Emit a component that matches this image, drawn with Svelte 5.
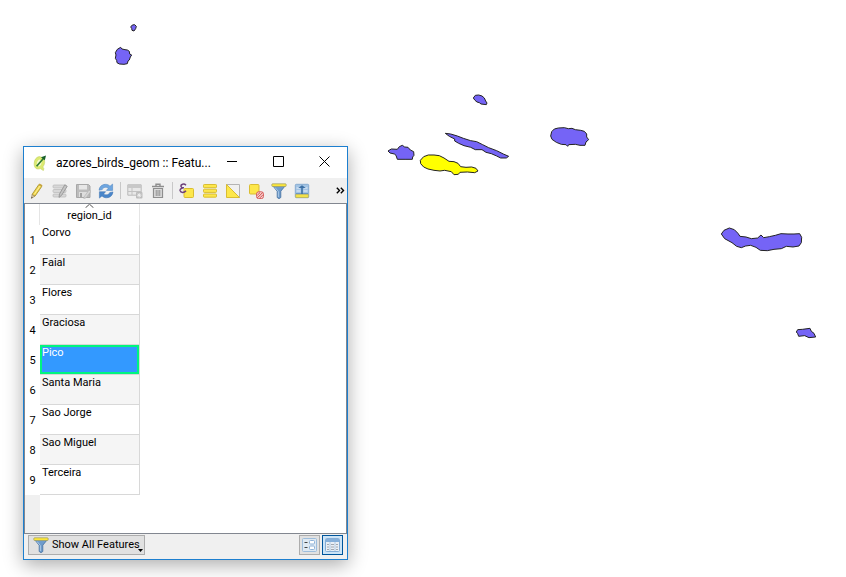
<script>
  const regions = ['Corvo', 'Faial', 'Flores', 'Graciosa', 'Pico', 'Santa Maria', 'Sao Jorge', 'Sao Miguel', 'Terceira'];
  let selected = $state('Pico');

  // Island outlines; each group has its own origin, in thirds of a pixel.
  const islands = [
    { name: 'Corvo', x: 100, y: 10, d: 'M97 45 L104 44 L109 49 L107 56 L102 63 L96 61 L95 55 L92 51Z' },
    { name: 'Flores', x: 100, y: 10, d: 'M62 112 L66 117 L75 119 L82 120 L88 124 L89 132 L95 135 L91 141 L88 150 L84 153 L82 161 L72 163 L58 162 L51 158 L50 151 L46 145 L48 135 L46 128 L52 118Z' },
    { name: 'Graciosa', x: 380, y: 85, d: 'M286 31 L296 30 L306 33 L313 39 L317 48 L321 54 L319 59 L303 57 L298 53 L291 51 L285 46 L280 39Z' },
    { name: 'Sao Jorge', x: 380, y: 85, d: 'M196 145 L212 147 L232 153 L250 160 L272 167 L290 170 L308 179 L326 188 L350 197 L370 207 L386 214 L379 219 L362 219 L350 213 L334 206 L318 202 L306 194 L286 194 L272 187 L252 182 L236 175 L224 168 L224 162 L208 154Z' },
    { name: 'Faial', x: 380, y: 85, d: 'M24 198 L34 192 L52 193 L58 185 L67 181 L74 186 L84 187 L91 195 L101 200 L102 211 L98 216 L97 223 L78 223 L52 223 L48 211 L43 207 L30 204Z' },
    { name: 'Pico', x: 380, y: 85, d: 'M131 215 L145 210 L162 210 L178 212 L192 219 L207 229 L222 230 L234 235 L242 245 L258 247 L275 246 L288 250 L294 258 L284 263 L262 261 L240 262 L235 268 L222 269 L214 260 L194 256 L180 258 L162 256 L144 252 L131 246 L122 236 L121 226Z' },
    { name: 'Terceira', x: 540, y: 115, d: 'M43 42 L55 39 L73 38 L85 41 L96 40 L106 44 L122 46 L133 49 L140 57 L140 66 L146 74 L138 81 L135 91 L120 91 L106 88 L86 89 L83 94 L78 89 L64 88 L49 82 L36 73 L32 63 L35 50Z' },
    { name: 'Sao Miguel', x: 710, y: 220, d: 'M34 42 L42 31 L58 24 L73 29 L84 40 L90 49 L108 51 L124 56 L143 54 L153 45 L161 53 L178 50 L196 46 L213 41 L234 42 L252 42 L269 41 L275 52 L274 68 L267 78 L249 81 L229 79 L214 86 L192 88 L172 92 L151 91 L138 82 L122 76 L107 78 L94 83 L80 79 L66 68 L44 56Z' },
    { name: 'Santa Maria', x: 710, y: 220, d: 'M263 329 L278 328 L300 325 L304 334 L312 340 L317 351 L297 353 L284 347 L266 349 L263 341 L259 336Z' }
  ];
</script>

{#snippet funnel()}
  <svg width="16" height="16" viewBox="0 0 16 16" aria-hidden="true">
    <path d="M1.5 2.5 L6.2 8.2 V14.5 L8 15.7 L9.8 14.5 V8.2 L14.5 2.5Z" fill="#6f9ccb" stroke="#44709f" stroke-width=".8" />
    <path d="M4 4.5 L7.4 8.5 V14" fill="none" stroke="#a9c8e6" />
    <rect x=".8" y=".8" width="14.4" height="2.7" rx=".8" fill="#fbe63a" stroke="#9a9a6a" stroke-width=".7" />
  </svg>
{/snippet}

<main>
  <svg class="map" viewBox="0 0 846 577" role="img" aria-label="Map of the Azores">
    {#each islands as island}
      <path
        d={island.d}
        transform="translate({island.x} {island.y}) scale(.3333)"
        class:picked={island.name === selected}
      />
    {/each}
  </svg>

  <section class="window" aria-label="Attribute table">
    <header class="titlebar">
      <svg width="16" height="16" viewBox="0 0 16 16" aria-hidden="true">
        <path d="M7.4 1.6 C4 2 2.4 5 2.2 8.2 C2 12 3.6 14.2 6.6 14 L8.4 13.6 L11.4 15.6 L11.8 13.6 L10.8 12 C13 9.4 13.2 5.6 11.8 3Z" fill="#dcea72" stroke="#c3d163" stroke-width=".6" />
        <path d="M7.8 4.6 C5.8 5 4.8 7 4.8 9.2 C5 11.8 8 11.8 9.2 9.2 L9.8 6Z" fill="#f7fbd0" />
        <path d="M4.6 11.2 L11.6 3.2" stroke="#2f7a2f" stroke-width="1.7" />
        <path d="M9 2.2 L14 .4 L12.8 5.2Z" fill="#175f2b" />
      </svg>
      <h1>azores_birds_geom :: Featu...</h1>
      <div class="controls">
        <button aria-label="Minimize"><svg width="11" height="11" viewBox="0 0 11 11"><path d="M0 5.5H10" /></svg></button>
        <button aria-label="Maximize"><svg width="11" height="11" viewBox="0 0 11 11"><path d="M.5 .5H10.5V10.5H.5Z" /></svg></button>
        <button aria-label="Close"><svg width="11" height="11" viewBox="0 0 11 11"><path d="M.5 .5L10.5 10.5M10.5 .5L.5 10.5" /></svg></button>
      </div>
    </header>

    <div class="toolbar" role="toolbar" aria-label="Table tools">
      <button aria-label="Toggle editing">
        <svg width="16" height="16" viewBox="0 0 16 16">
          <path d="M3 11.5 L9.8 1.6 L12.8 3.4 L6 13.2Z" fill="#f0d64a" stroke="#a08a2c" stroke-width=".8" />
          <path d="M5.3 11.4 L11.2 2.8" stroke="#fff2a0" />
          <path d="M3 11.5 L6 13.2 L2.4 15.4Z" fill="#ddc9a0" stroke="#8b7a50" stroke-width=".5" />
          <path d="M9.8 1.6 L10.6 .5 L13.5 2.2 L12.8 3.4Z" fill="#c7a23b" />
          <path d="M2.3 15.6 L2.5 13.8 L3.8 14.6Z" fill="#444" />
        </svg>
      </button>
      <button aria-label="Multi edit">
        <svg width="16" height="16" viewBox="0 0 16 16">
          <g fill="#d8d8d8" stroke="#bcbcbc" stroke-width=".8"><rect x="1" y="2" width="13" height="3" rx="1" /><rect x="1" y="6.5" width="13" height="3" rx="1" /><rect x="1" y="11" width="13" height="3" rx="1" /></g>
          <path d="M7.5 11 L12.8 1.8 L15.2 3.3 L9.6 12.3 L7 14.4Z" fill="#c4c4c4" stroke="#959595" stroke-width=".9" />
        </svg>
      </button>
      <button aria-label="Save edits">
        <svg width="16" height="16" viewBox="0 0 16 16">
          <path d="M1.5 1.5H13.5L15 3V14.5H1.5Z" fill="#bcbcbc" stroke="#a8a8a8" />
          <rect x="4" y="2" width="8" height="4.5" fill="#e7e7e7" />
          <rect x="4" y="9" width="8" height="5" fill="#dedede" />
          <rect x="5" y="10" width="2" height="4" fill="#a2a2a2" />
          <path d="M9 14 L14 7 L16 8.3 L11 14.8 L8.8 15.6Z" fill="#d6d6d6" stroke="#b0b0b0" stroke-width=".6" />
        </svg>
      </button>
      <button aria-label="Reload">
        <svg width="16" height="16" viewBox="0 0 16 16">
          <path d="M1 7.2 C1.3 3.5 4.2 1.3 7.4 1.3 C9.6 1.3 11 2.1 12 3.2 L14.6 1 V7.4 H8.4 L10.3 5.2 C8.8 3.8 5.4 3.8 4.2 6.6 Z" fill="#6ea6e0" stroke="#4a80bd" stroke-width=".5" />
          <path d="M15 8.9 C14.6 12.6 11.8 14.8 8.6 14.8 C6.4 14.8 5 14 4 12.9 L1.4 15.1 V8.7 H7.6 L5.7 10.9 C7.2 12.3 10.6 12.3 11.8 9.5 Z" fill="#4a86ca" stroke="#3a70b0" stroke-width=".5" />
        </svg>
      </button>
      <span class="sep"></span>
      <button aria-label="Add feature">
        <svg width="16" height="16" viewBox="0 0 16 16">
          <path d="M.8 1.8H14.2V12.2H.8Z" fill="#e8e8e8" stroke="#bababa" />
          <path d="M1 2H14V5H1Z" fill="#c8c8c8" />
          <path d="M1 8.5H14M5 5V12" stroke="#c2c2c2" />
          <rect x="9" y="9" width="6.5" height="6.5" rx="1" fill="#bcbcbc" />
          <path d="M12.2 10V14.5M10 12.2H14.5M10.7 10.7L13.8 13.8M13.8 10.7L10.7 13.8" stroke="#f4f4f4" stroke-width=".8" />
        </svg>
      </button>
      <button aria-label="Delete selected">
        <svg width="16" height="16" viewBox="0 0 16 16" fill="none" stroke="#8e8e8e">
          <path d="M2 3.5H14M6 3V1.2H10V3" stroke-width="1.4" />
          <path d="M3.5 5.5H12.5V14.5H3.5Z" fill="#dcdcdc" stroke-width="1.2" />
          <path d="M6.2 7V13M8 7V13M9.8 7V13" />
        </svg>
      </button>
      <span class="sep"></span>
      <button aria-label="Select by expression">
        <svg width="16" height="16" viewBox="0 0 16 16">
          <rect x="5" y="5.5" width="9.5" height="9" rx="1" fill="#fde74a" stroke="#d9bd32" />
          <path d="M7 2.2 C5 .2 1.6 1.2 2 3.3 C2.2 4.5 3.6 4.9 4.8 4.8 C2.8 4.8 .8 5.8 1.1 7.7 C1.6 10 5.2 10 7 7.8" fill="none" stroke="#6c4079" stroke-width="1.5" />
        </svg>
      </button>
      <button aria-label="Select all">
        <svg width="16" height="16" viewBox="0 0 16 16" fill="#fde74a" stroke="#d9bd32">
          <rect x="1.5" y="1.5" width="13" height="3.2" rx=".8" /><rect x="1.5" y="6.2" width="13" height="3.2" rx=".8" /><rect x="1.5" y="11" width="13" height="3.2" rx=".8" />
        </svg>
      </button>
      <button aria-label="Invert selection">
        <svg width="16" height="16" viewBox="0 0 16 16">
          <path d="M1.5 1.5H14.5V14.5Z" fill="#f0f0f0" stroke="#b4b4b4" />
          <path d="M1.5 1.5V14.5H14.5Z" fill="#fde74a" stroke="#d9bd32" />
        </svg>
      </button>
      <button aria-label="Deselect all">
        <svg width="16" height="16" viewBox="0 0 16 16">
          <rect x="1.5" y="1.5" width="9.5" height="9.5" rx="1" fill="#fde74a" stroke="#d9bd32" />
          <rect x="8.6" y="8.8" width="6.8" height="6.8" rx="2" fill="#f6d4d2" stroke="#d65a5a" />
          <path d="M9.4 14.8L14.6 9.6M9.4 12.2L12 9.6M12 14.8L14.6 12.2" stroke="#d14848" />
        </svg>
      </button>
      <button aria-label="Filter">{@render funnel()}</button>
      <button aria-label="Move selection to top">
        <svg width="16" height="16" viewBox="0 0 16 16">
          <rect x="1.3" y="1.3" width="13.4" height="13.4" rx="1" fill="#a3c4e4" stroke="#86aad0" />
          <path d="M2.5 5H6M10 5H13.5M2.5 8H6.5M9.5 8H13.5" stroke="#cfe0f2" stroke-width="1.4" />
          <path d="M2 10.5H14" stroke="#6f98c0" />
          <rect x="1.8" y="11.6" width="12.4" height="2.8" fill="#f2e24a" stroke="#c5b33d" stroke-width=".6" />
          <path d="M7.2 11V5H4.2L8 2.3L11.8 5H8.8V11Z" fill="#3d70a5" />
        </svg>
      </button>
      <button class="more" aria-label="More tools">
        <svg width="9" height="7" viewBox="0 0 9 7"><path d="M.8 .8L3.5 3.5L.8 6.2M4.8 .8L7.5 3.5L4.8 6.2" fill="none" stroke="#000" stroke-width="1.4" /></svg>
      </button>
    </div>

    <div class="view">
      <table>
        <thead>
          <tr>
            <td></td>
            <th scope="col">
              <svg width="9" height="4" viewBox="0 0 9 4" aria-hidden="true"><path d="M.5 3.8L4.5 .2L8.5 3.8" fill="none" stroke="#555" /></svg>
              <span>region_id</span>
            </th>
          </tr>
        </thead>
        <tbody>
          {#each regions as region, i}
            <tr class:selected={region === selected} onclick={() => (selected = region)}>
              <th scope="row">{i + 1}</th>
              <td><div class="cell">{region}</div></td>
            </tr>
          {/each}
        </tbody>
      </table>
      <div class="gutter"></div>
    </div>

    <footer>
      <button class="show">
        {@render funnel()}
        <span>Show All Features</span>
        <svg class="drop" width="5" height="3" viewBox="0 0 5 3" aria-hidden="true"><path d="M0 0H5L2.5 3Z" /></svg>
      </button>
      <div class="modes">
        <button aria-label="Form view">
          <svg width="15" height="14" viewBox="0 0 15 14">
            <rect x=".5" y=".5" width="14" height="13" rx="1" fill="#dfe9f2" stroke="#9dbddc" />
            <path d="M2.5 4.5H5.5M2.5 9.5H5.5" stroke="#444" stroke-width="1.2" />
            <g fill="#fff" stroke="#8fb3d8"><rect x="7.5" y="2.5" width="5" height="3.5" rx="1" /><rect x="7.5" y="8" width="5" height="3.5" rx="1" /></g>
          </svg>
        </button>
        <button class="active" aria-label="Table view">
          <svg width="15" height="14" viewBox="0 0 15 14">
            <rect x=".5" y=".5" width="14" height="13" rx="1" fill="#e9eff5" stroke="#86aed6" />
            <path d="M1 1H14V4H1Z" fill="#86b0da" />
            <path d="M2 6.5H4M6 6.5H9M11 6.5H13M2 9H4M6 9H9M11 9H13M2 11.5H4M6 11.5H9M11 11.5H13" stroke="#a2a8b0" />
            <path d="M5 4V13M10 4V13" stroke="#9dbddc" stroke-width=".7" />
          </svg>
        </button>
      </div>
    </footer>
  </section>
</main>

<style>
  :global(body) {
    background: #fff;
  }
  main {
    position: relative;
    font: 11px/16px Roboto, "Noto Sans", sans-serif;
    color: #000;
  }
  .map {
    display: block;
    width: 100%;
  }
  .map path {
    fill: #7564f6;
    stroke: #222;
    stroke-width: 3;
    stroke-linejoin: round;
  }
  .map .picked {
    fill: #ff0;
  }
  button {
    display: flex;
    align-items: center;
    justify-content: center;
    margin: 0;
    padding: 0;
    border: 0;
    background: none;
    color: inherit;
    font: inherit;
  }
  svg {
    flex: none;
  }
  .window {
    position: absolute;
    left: 23px;
    top: 146px;
    width: 323px;
    border: 1px solid #1d7fcf;
    background: #f0f0f0;
    box-shadow: 0 5px 18px rgba(0, 0, 0, 0.33);
  }
  .titlebar {
    display: flex;
    align-items: center;
    height: 31px;
    padding-left: 8px;
    background: #fff;
  }
  h1 {
    flex: 1;
    min-width: 0;
    margin: 0 0 0 8px;
    font-size: 12px;
    line-height: 16px;
    font-weight: 400;
    white-space: nowrap;
  }
  .controls {
    display: flex;
  }
  .controls button {
    width: 46px;
    height: 29px;
  }
  .controls svg {
    margin-bottom: 2px;
  }
  .controls path {
    fill: none;
    stroke: #000;
  }
  .toolbar {
    display: flex;
    align-items: center;
    height: 25px;
    padding-left: 1px;
  }
  .toolbar button {
    padding: 0 3px 0 4px;
  }
  .toolbar .more {
    margin-left: auto;
    padding: 0 2px;
  }
  .sep {
    width: 1px;
    height: 17px;
    margin: 0 2px 0 3px;
    background: #c8c8c8;
  }
  .view {
    display: flex;
    flex-direction: column;
    border: 1px solid #828790;
    background: #fff;
  }
  table {
    width: 115px;
    border-collapse: separate;
    border-spacing: 0;
    table-layout: fixed;
  }
  th,
  td {
    padding: 0;
    font-weight: 400;
  }
  thead td {
    width: 14px;
    border-right: 1px solid #e5e5e5;
  }
  thead th {
    height: 21px;
    border-right: 1px solid #e5e5e5;
    vertical-align: top;
  }
  thead th svg,
  thead th span {
    display: block;
    margin: 0 auto;
  }
  tbody th {
    height: 28px;
    padding-top: 2px;
    text-align: center;
  }
  tbody td {
    border: solid #d8d8d8;
    border-width: 0 1px 1px 0;
    background: #fff;
  }
  tbody tr:nth-child(even) td {
    background: #f5f5f5;
  }
  .cell {
    height: 29px;
    box-sizing: border-box;
    padding-left: 2px;
  }
  .selected .cell {
    padding-left: 0;
    border: 2px solid #00f57f;
    background: #3399ff;
    color: #fff;
    line-height: 12px;
  }
  .gutter {
    width: 15px;
    height: 38px;
    background: #f0f0f0;
  }
  footer {
    display: flex;
    justify-content: space-between;
    padding: 1px 4px 4px;
  }
  footer button {
    height: 20px;
    border: 1px solid #adadad;
    background: #e1e1e1;
  }
  .show {
    gap: 3px;
    padding: 0 1px 0 4px;
  }
  .show span {
    white-space: nowrap;
  }
  .drop {
    align-self: flex-end;
    margin: 0 0 2px -5px;
  }
  .modes {
    display: flex;
    gap: 2px;
  }
  .modes button {
    width: 21px;
  }
  .modes .active {
    border-color: #00559b;
    background: #cce4f7;
  }
</style>
